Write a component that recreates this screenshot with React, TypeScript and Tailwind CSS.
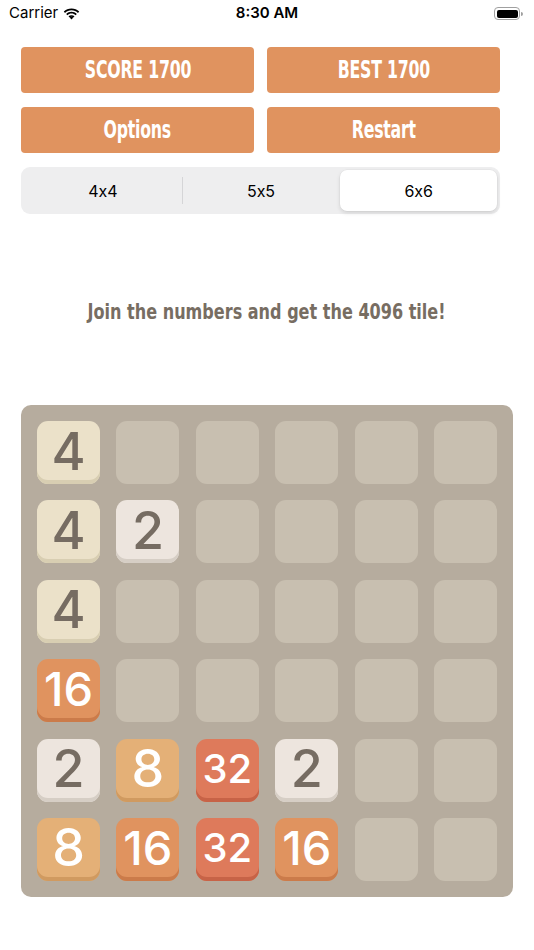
import { useState } from "react";

type Cell = number | null;

const board: Cell[][] = [
  [4, null, null, null, null, null],
  [4, 2, null, null, null, null],
  [4, null, null, null, null, null],
  [16, null, null, null, null, null],
  [2, 8, 32, 2, null, null],
  [8, 16, 32, 16, null, null],
];

const tileStyles: Record<number, string> = {
  2: "bg-[#ede5de] shadow-[inset_0_-4px_0_#d6cec5] text-[#766c62]",
  4: "bg-[#ebe1c9] shadow-[inset_0_-4px_0_#d8ceb2] text-[#766c62]",
  8: "bg-[#e4b077] shadow-[inset_0_-4px_0_#d09a60] text-white",
  16: "bg-[#e0935f] shadow-[inset_0_-4px_0_#cb7b4a] text-white",
  32: "bg-[#de7a5b] shadow-[inset_0_-4px_0_#c76347] text-white",
};

const sizeFor = (v: number) =>
  v < 10 ? "text-[52px]" : v < 20 ? "text-[47px]" : "text-[40px]";

function StatusBar() {
  return (
    <div className="h-[27px] flex items-center justify-between px-[9px] font-['Inter',sans-serif] text-[15px] text-black">
      <div className="flex items-center gap-[5px] w-[120px]">
        <span>Carrier</span>
        <svg width="17" height="12" viewBox="0 0 17 12">
          <path d="M8.5 2.3c2.5 0 4.8 1 6.5 2.6l1.2-1.3C14.2 1.6 11.5.5 8.5.5S2.8 1.6.8 3.6L2 4.9c1.7-1.6 4-2.6 6.5-2.6z" fill="black" />
          <path d="M8.5 5.6c1.6 0 3 .6 4.1 1.6l1.2-1.3c-1.4-1.3-3.300-2.1-5.3-2.1S4.6 4.6 3.2 5.9l1.2 1.3c1.1-1 2.5-1.6 4.1-1.6z" fill="black" />
          <path d="M8.5 8.8c.7 0 1.3.3 1.8.7l-1.8 2-1.8-2c.5-.4 1.1-.7 1.8-.7z" fill="black" />
          <path d="M8.5 7.2c1.2 0 2.2.4 3 1.1l-1.2 1.2c-.5-.4-1.1-.7-1.8-.7s-1.3.3-1.8.7L5.5 8.3c.8-.7 1.8-1.100 3-1.1z" fill="black" />
        </svg>
      </div>
      <span className="font-semibold">8:30 AM</span>
      <div className="w-[120px] flex justify-end pr-[2px]">
        <div className="flex items-center">
          <div className="w-[26px] h-[13px] rounded-[4px] border border-[#a0a0a0] p-[1.5px]">
            <div className="w-full h-full rounded-[2px] bg-black" />
          </div>
          <div className="w-[1.5px] h-[4px] bg-[#a0a0a0] rounded-r-sm ml-[1px]" />
        </div>
      </div>
    </div>
  );
}

function ActionButton({ label }: { label: string }) {
  return (
    <button className="h-[46px] rounded-[4px] bg-[#e0935f] text-white flex items-center justify-center">
      <span className="font-['DejaVu_Sans',sans-serif] font-bold text-[25px] font-stretch-condensed inline-block scale-x-[0.7] tracking-[-0.3px]">
        {label}
      </span>
    </button>
  );
}

function SizePicker() {
  const [size, setSize] = useState("6x6");
  const options = ["4x4", "5x5", "6x6"];
  return (
    <div className="h-[47px] rounded-[9px] bg-[#eeeeef] p-[3px] flex items-stretch font-['Inter',sans-serif] [font-feature-settings:'calt'_0] text-[16px] text-black">
      {options.map((o, i) => (
        <div key={o} className="flex-1 flex items-stretch">
          {i > 0 && (
            <div
              className={
                "w-px my-[7px] " +
                (size === o || size === options[i - 1] ? "bg-transparent" : "bg-[#d5d5d7]")
              }
            />
          )}
          <button
            onClick={() => setSize(o)}
            className={
              "flex-1 rounded-[7px] " +
              (size === o ? "bg-white shadow-[0_2px_4px_rgba(0,0,0,0.12),0_0_0_0.5px_rgba(0,0,0,0.04)]" : "")
            }
          >
            {o}
          </button>
        </div>
      ))}
    </div>
  );
}

function Board() {
  return (
    <div className="w-[492px] ml-[21px] rounded-[10px] bg-[#b6ac9e] p-4 grid grid-cols-6 gap-[16.4px]">
      {board.flat().map((v, i) =>
        v === null ? (
          <div key={i} className="h-[63px] rounded-[11px] bg-[#c8bfb0]" />
        ) : (
          <div
            key={i}
            className={
              "h-[63px] rounded-[11px] flex items-center justify-center pb-[2px] font-['Inter',sans-serif] font-medium " +
              tileStyles[v] +
              " " +
              sizeFor(v)
            }
          >
            {v}
          </div>
        )
      )}
    </div>
  );
}

export default function App() {
  return (
    <div className="w-[534px] h-[950px] bg-white overflow-hidden">
      <StatusBar />
      <div className="px-[21px] pr-[34px] mt-[20px] flex flex-col gap-[14px]">
        <div className="grid grid-cols-2 gap-[13px]">
          <ActionButton label="SCORE 1700" />
          <ActionButton label="BEST 1700" />
        </div>
        <div className="grid grid-cols-2 gap-[13px]">
          <ActionButton label="Options" />
          <ActionButton label="Restart" />
        </div>
        <SizePicker />
      </div>
      <div className="h-[191px] flex items-center justify-center pt-[6px]">
        <span className="font-['DejaVu_Sans',sans-serif] font-bold font-stretch-condensed text-[21px] text-[#776d62] inline-block scale-x-[0.85]">
          Join the numbers and get the 4096 tile!
        </span>
      </div>
      <Board />
    </div>
  );
}
